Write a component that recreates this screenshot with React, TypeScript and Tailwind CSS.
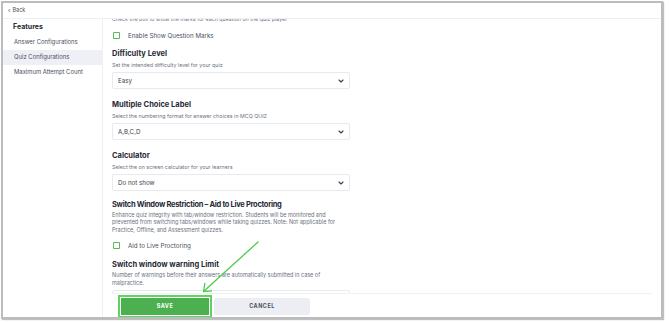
import { ReactNode } from 'react'

const font = { fontFamily: 'Inter, "Liberation Sans", sans-serif' }

function Chevron() {
  return (
    <svg width="6" height="4" viewBox="0 0 6 4" className="text-[#3a3f4b]">
      <path d="M1 1 L3 3 L5 1" fill="none" stroke="currentColor" strokeWidth="1.1" strokeLinecap="round" strokeLinejoin="round" />
    </svg>
  )
}

function Select({ value }: { value: string }) {
  return (
    <div className="mt-[3.5px] flex h-[17px] w-[238px] items-center justify-between rounded-[2px] border border-[#e8eaf0] pl-[5px] pr-[5px]">
      <span className="text-[6.2px] text-[#3a3f4b]">{value}</span>
      <Chevron />
    </div>
  )
}

function Check({ label }: { label: string }) {
  return (
    <div className="flex h-[8px] items-center gap-[8px]">
      <div className="ml-[1px] h-[7px] w-[7px] rounded-[1px] shadow-[inset_0_0_0_1px_#5cb85c]" />
      <span className="text-[6.2px] leading-[8px] text-[#4a5060]">{label}</span>
    </div>
  )
}

function Field({
  title,
  hint,
  children,
  titleClass = '',
}: {
  title: string
  hint: ReactNode
  children?: ReactNode
  titleClass?: string
}) {
  return (
    <div>
      <div className={`text-[7.5px] font-bold leading-[10px] text-[#252a36] ${titleClass}`}>{title}</div>
      <div className="mt-[1.5px] text-[5.3px] leading-[8px] text-[#6b7180]">{hint}</div>
      {children}
    </div>
  )
}

export default function App() {
  return (
    <div className="relative h-[322px] w-[670px] bg-white pl-[1px] pt-[1px]" style={font}>
      <div className="flex h-[318px] w-[662px] flex-col overflow-hidden border-2 border-[#bcbcbc] bg-white shadow-[1px_1px_1px_rgba(0,0,0,0.25)]">
        {/* top bar */}
        <div className="flex h-[16px] shrink-0 items-center gap-[2px] border-b border-[#eef0f5] pl-[5px] text-[5.5px] text-[#4a5060]">
          <span className="text-[6.5px] leading-none">‹</span>
          <span>Back</span>
        </div>

        <div className="flex min-h-0 flex-1">
          {/* sidebar */}
          <div className="w-[100px] shrink-0 border-r border-[#eef0f5] pt-[3px]">
            <div className="pl-[10px] text-[7px] font-bold leading-[10px] text-[#252a36]">Features</div>
            <div className="mt-[3px] flex flex-col text-[5.9px] text-[#4a5060]">
              <div className="flex h-[15px] items-center pl-[11px]">Answer Configurations</div>
              <div className="flex h-[15px] items-center bg-[#eef0f6] pl-[11px]">Quiz Configurations</div>
              <div className="flex h-[15px] items-center pl-[11px]">Maximum Attempt Count</div>
            </div>
          </div>

          {/* main */}
          <div className="relative min-w-0 flex-1 overflow-hidden">
            <div className="-mt-[4.5px] flex flex-col pl-[9px]">
              <div className="text-[5.3px] leading-[8px] text-[#6b7180]">
                Check the box to show the marks for each question on the quiz player
              </div>
              <div className="mt-[9px]">
                <Check label="Enable Show Question Marks" />
              </div>

              <div className="mt-[9.5px] flex flex-col">
                <Field title="Difficulty Level" hint="Set the intended difficulty level for your quiz">
                  <Select value="Easy" />
                </Field>
                <div className="mt-[11px]">
                  <Field title="Multiple Choice Label" hint="Select the numbering format for answer choices in MCQ QUIZ">
                    <Select value="A,B,C,D" />
                  </Field>
                </div>
                <div className="mt-[11px]">
                  <Field title="Calculator" hint="Select the on screen calculator for your learners">
                    <Select value="Do not show" />
                  </Field>
                </div>
                <div className="mt-[9px]">
                  <Field
                    title="Switch Window Restriction – Aid to Live Proctoring"
                    titleClass="tracking-[-0.3px]"
                    hint={
                      <span className="block text-[5.5px] leading-[7.7px]">
                        Enhance quiz integrity with tab/window restriction. Students will be monitored and
                        <br />
                        prevented from switching tabs/windows while taking quizzes. Note: Not applicable for
                        <br />
                        Practice, Offline, and Assessment quizzes.
                      </span>
                    }
                  >
                    <div className="mt-[7px]">
                      <Check label="Aid to Live Proctoring" />
                    </div>
                  </Field>
                </div>
                <div className="mt-[10px]">
                  <Field
                    title="Switch window warning Limit"
                    hint={
                      <span className="block text-[5.5px] leading-[8px]">
                        Number of warnings before their answers are automatically submitted in case of
                        <br />
                        malpractice.
                      </span>
                    }
                  >
                    <div className="mt-[3px] h-[17px] w-[238px] rounded-[2px] border border-[#e8eaf0]" />
                  </Field>
                </div>
              </div>
            </div>

            {/* footer */}
            <div className="absolute bottom-0 left-[9px] right-[9px] flex h-[24px] gap-[5px] border-t border-[#f0f1f5] bg-white pl-[9px] pt-[4px]">
              <div className="flex h-[17px] w-[88px] items-center justify-center bg-[#4caf50] text-[5.5px] font-bold tracking-[0.5px] text-white ring-2 ring-[#5ed35e] ring-offset-1">
                SAVE
              </div>
              <div className="flex h-[17px] w-[96px] items-center justify-center rounded-[2px] bg-[#eceef4] text-[5.5px] font-bold tracking-[0.5px] text-[#4a5060]">
                CANCEL
              </div>
            </div>
          </div>
        </div>
      </div>

      {/* annotation arrow */}
      <svg className="pointer-events-none absolute left-0 top-0" width="670" height="322">
        <g stroke="#4fc94f" strokeWidth="1.3" fill="none" strokeLinecap="round" strokeLinejoin="round">
          <line x1="258" y1="242" x2="203.5" y2="291.5" />
          <path d="M211.5 290.8 L203.5 291.5 L204.9 283.5" />
        </g>
      </svg>
    </div>
  )
}
